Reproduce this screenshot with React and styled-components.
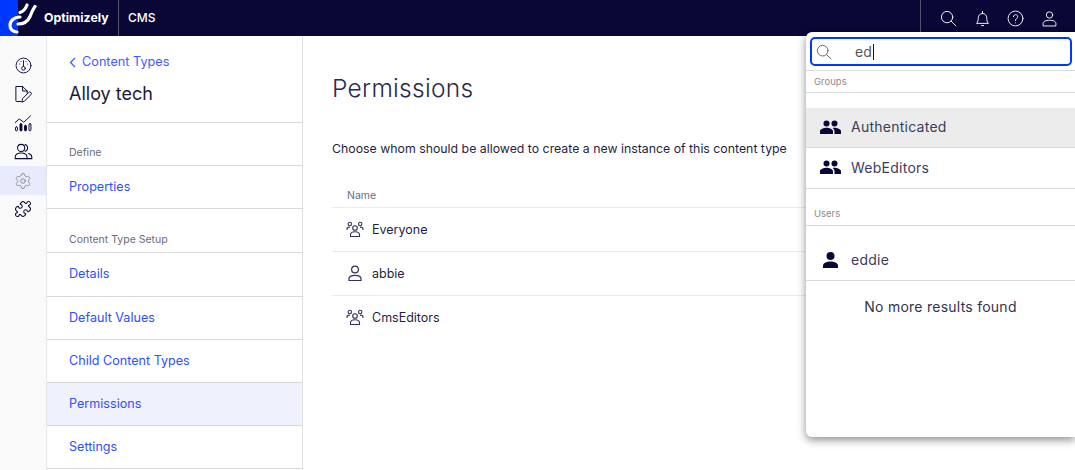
import React from "react";
import styled, { createGlobalStyle } from "styled-components";
import { Settings, Puzzle } from "lucide-react";

const Global = createGlobalStyle`
  html, body { margin: 0; padding: 0; background: #fff; }
  body { font-family: Inter, "Liberation Sans", sans-serif; overflow: hidden; }
  * { box-sizing: border-box; }
`;
const Page = styled.div`position: relative; width: 1075px; height: 470px; overflow: hidden; display: flex; flex-direction: column;`;
const TopBar = styled.header`height: 36px; flex: none; background: #080736; display: flex; align-items: stretch; color: #fff;`;
const LogoBox = styled.div`width: 37px; flex: none; background: linear-gradient(90deg, #0037ff 18px, #080736 18px); svg { display: block; }`;
const Brand = styled.div`width: 82px; font-size: 12.3px; font-weight: 700; line-height: 36px; padding-left: 7px; border-right: 1px solid #55546f;`;
const Product = styled.div`font-size: 12px; font-weight: 500; padding-left: 9px; line-height: 36px;`;
const TopIcons = styled.div`margin-left: auto; width: 155px; border-left: 1px solid #55546f; display: flex; align-items: center; padding-left: 19px; gap: 16.6px;`;
const Body = styled.div`flex: 1; display: flex; min-height: 0;`;
const Rail = styled.nav`width: 47px; flex: none; background: #fafafa; border-right: 1px solid #e6e6e6; padding-top: 15px; display: flex; flex-direction: column; align-items: stretch;`;
const RailItem = styled.div`height: 28.8px; display: flex; align-items: center; justify-content: center; color: ${p => p.$active ? "#8a8aa0" : "#080736"}; background: ${p => p.$active ? "#e8ebfb" : "transparent"};`;
const Side = styled.aside`width: 256px; flex: none; border-right: 1px solid #e0e0e0; display: flex; flex-direction: column;`;
const SideHead = styled.div`height: 87px; padding: 18px 22px 0; border-bottom: 1px solid #d9d9d9; flex: none;`;
const Back = styled.div`display: flex; align-items: center; gap: 6px; color: #3f5cff; font-size: 12.7px; line-height: 16px;`;
const SideTitle = styled.div`margin-top: 12px; font-size: 18px; line-height: 24px; color: #1a1a3c;`;
const SectionLabel = styled.div`height: ${p => p.$h}px; padding: 0 22px 6px; display: flex; align-items: flex-end; font-size: 10.5px; color: #6b6b7d; border-bottom: 1px solid #d9d9d9; flex: none;`;
const SideLink = styled.div`height: ${p => p.$h || 43}px; display: flex; align-items: center; padding: 0 0 2px 22px; font-size: 12.6px; color: ${p => p.$active ? "#3350f0" : "#2f50f5"}; background: ${p => p.$active ? "#eff1fd" : "#fff"}; border-bottom: 1px solid #d9d9d9; flex: none;`;
const Main = styled.main`flex: 1; padding: 36px 29px 0; min-width: 0;`;
const Title = styled.h1`margin: 0; font-weight: 300; font-size: 24.5px; line-height: 32px; color: #2a2a4a; letter-spacing: .3px;`;
const Lead = styled.p`margin: 37px 0 0; font-size: 12.32px; line-height: 16px; color: #1f1f40;`;
const Table = styled.div`margin-top: 23px; width: 560px;`;
const TH = styled.div`height: 28px; display: flex; align-items: flex-end; padding: 0 0 5px 15px; font-size: 10.5px; font-weight: 400; color: #6b7080; border-bottom: 1px solid #ebebeb;`;
const TR = styled.div`height: 44px; display: flex; align-items: center; padding: 0 0 ${p => p.$pb || 0}px 14px; gap: 8px; font-size: 12.5px; color: #1f1f40; border-bottom: 1px solid #ebebeb; &:last-child { border-bottom: 0; }`;
const Drop = styled.section`position: absolute; left: 806px; top: 32px; width: 269px; height: 405px; background: #fff; border-radius: 6px 0 0 6px; box-shadow: 0 3px 9px rgba(0,0,0,.45);`;
const Search = styled.div`margin: 5px 3px 0 4px; height: 29px; border: 2px solid #0037ff; border-radius: 5px; display: flex; align-items: center; padding-left: 4px; color: #555; font-size: 14px;`;
const Typed = styled.span`margin-left: 23px; display: inline-block; border-right: 1px solid #111; line-height: 16px; padding-right: 1px;`;
const Head = styled.div`height: ${p => p.$h}px; padding: 0 0 ${p => p.$pb || 0}px 8px; display: flex; align-items: ${p => p.$align || "center"}; font-size: 9.5px; color: #8b8b8b; border-bottom: 1px solid #d9d9d9; ${p => p.$top ? "border-top: 1px solid #d9d9d9;" : ""}`;
const Spacer = styled.div`height: ${p => p.$h}px;`;
const Row = styled.div`height: ${p => p.$h}px; display: flex; align-items: center; padding: 0 0 2px 14px; gap: 10px; font-size: 14px; letter-spacing: .25px; color: #3c3c5c; background: ${p => p.$active ? "#ececec" : "#fff"}; border-bottom: 1px solid #d9d9d9;`;
const RowIcon = styled.span`width: 21px; display: flex; justify-content: center; color: #080736;`;
const Empty = styled.div`margin-top: 17px; text-align: center; font-size: 14px; font-weight: 400; color: #33334f; letter-spacing: .25px;`;

const S = ({ size = 17, children, w = 1.3 }) => <svg width={size} height={size} viewBox="0 0 24 24" fill="none" stroke="currentColor" strokeWidth={w} strokeLinecap="round" strokeLinejoin="round">{children}</svg>;
const SearchIcon = ({ size = 18 }) => <S size={size}><circle cx="10" cy="10" r="8" /><path d="M16 16l6.5 6.5" /></S>;
const GroupsIcon = () => <svg width="21" height="14" viewBox="0 0 21 14" fill="currentColor"><circle cx="6.5" cy="3.5" r="3" /><circle cx="14.5" cy="3.5" r="3" /><path d="M0 14v-2.5C0 9 4 7.8 6.5 7.8S13 9 13 11.5V14zM14.5 14v-2.5c0-1.500-.7-2.700-1.900-3.600.6-.1 1.300-.1 1.900-.1 2.500 0 6.500 1.200 6.500 3.700V14z" /></svg>;
const PersonIcon = () => <svg width="15" height="16" viewBox="0 0 15 16" fill="currentColor"><circle cx="7.5" cy="4" r="4" /><path d="M0 16v-2.500C0 10.800 4.500 9.500 7.500 9.500s7.500 1.300 7.500 4V16z" /></svg>;
const OutlineGroup = () => <svg width="18" height="17" viewBox="0 0 18 17" fill="none" stroke="#33335a" strokeWidth="1.1"><circle cx="9" cy="7" r="2.3"/><circle cx="3.8" cy="3" r="1.7"/><circle cx="14.2" cy="3" r="1.7"/><path d="M4.500 15.500v-1.700c0-2 2-3 4.500-3s4.500 1 4.500 3v1.700z"/><path d="M1 9V7.800c0-1 1.300-1.700 3-1.700M17 9V7.800c0-1-1.300-1.700-3-1.700"/></svg>;
const OutlinePerson = () => <svg width="18" height="17" viewBox="0 0 18 17" fill="none" stroke="#33335a" strokeWidth="1.2"><circle cx="9" cy="4.500" r="3.400"/><path d="M3 15.500v-1.700c0-2.300 2.600-3.500 6-3.500s6 1.200 6 3.500v1.700z"/></svg>;

const railIcons = [
  <S size={17} key="a"><circle cx="12" cy="12" r="10.500" /><path d="M12 5v8" /><circle cx="12" cy="16" r="2.600" /><path d="M6.500 10h.1M17.500 10h.1M8.500 6.500h.1M15.500 6.500h.1" /></S>,
  <S size={18} key="b"><path d="M9 22H3.500a1 1 0 01-1-1V2h9l6 6v3" /><path d="M11.500 2v6h6" /><path d="M10.500 22.500l1-4.500 8-8a2 2 0 013 3l-8 8z" /></S>,
  <S size={18} key="c"><rect x="2" y="17" width="2.600" height="5.500" rx="1.300" /><rect x="8" y="13" width="2.600" height="9.500" rx="1" fill="currentColor" /><rect x="14" y="15" width="2.600" height="7.500" rx="1.300" fill="currentColor" /><rect x="20" y="13" width="2.600" height="9.500" rx="1.300" /><path d="M1.500 11.500L7 6.500l6 4.500 9-8.500" /></S>,
  <S size={19} key="d"><circle cx="9" cy="7.500" r="4.500" /><path d="M1.500 21v-1.500c0-3.500 3-5.500 7.500-5.500s7.500 2 7.500 5.500V21z" /><path d="M14 3.200a4.500 4.500 0 010 8.600M18.500 14.500c2.500.8 4 2.500 4 4.500v2h-6" /></S>,
  <Settings key="e" size={18} strokeWidth={1.3} />,
  <Puzzle key="f" size={18} strokeWidth={1.4} />,
];

export default function App() {
  return (
    <Page>
      <Global />
      <TopBar>
        <LogoBox>
          <svg width="37" height="36" viewBox="0 0 37 36" fill="none" stroke="#fff" strokeWidth="3.200" strokeLinecap="round">
            <path d="M20 17C14 17 10 21 10 25.500 10 29 13 32 17 32" />
            <path d="M18 24C24 24 28 21 30 16.500 31.500 13 33 9 35 6.500" />
            <path d="M20 12.500C23 11.500 25.500 9 27 5" />
          </svg>
        </LogoBox>
        <Brand>Optimizely</Brand>
        <Product>CMS</Product>
        <TopIcons>
          <SearchIcon size={17} />
          <S size={17}><path d="M4 18.500c1.500-1.500 2-4 2-7.500a6 6 0 0112 0c0 3.500.5 6 2 7.500z" /><path d="M10.500 22h3M12 2v3" /></S>
          <S size={17}><circle cx="12" cy="12" r="10.500" /><path d="M9 9.500a3 3 0 115 2.300c-1.200.9-2 1.500-2 3" /><path d="M12 18h.1" /></S>
          <S size={17}><circle cx="12" cy="7" r="4.500" /><path d="M3 22v-3c0-3 4-4.500 9-4.500s9 1.500 9 4.500v3z" /></S>
        </TopIcons>
      </TopBar>
      <Body>
        <Rail>
          {railIcons.map((icon, i) => <RailItem key={i} $active={i === 4}>{icon}</RailItem>)}
        </Rail>
        <Side>
          <SideHead>
            <Back>
              <svg width="7" height="11" viewBox="0 0 7 11" fill="none" stroke="#3f5cff" strokeWidth="1.300"><path d="M6 1L1.500 5.500 6 10" /></svg>
              Content Types
            </Back>
            <SideTitle>Alloy tech</SideTitle>
          </SideHead>
          <SectionLabel $h={43}>Define</SectionLabel>
          <SideLink>Properties</SideLink>
          <SectionLabel $h={44}>Content Type Setup</SectionLabel>
          <SideLink $h={44}>Details</SideLink>
          <SideLink $h={43}>Default Values</SideLink>
          <SideLink $h={43}>Child Content Types</SideLink>
          <SideLink $active>Permissions</SideLink>
          <SideLink>Settings</SideLink>
        </Side>
        <Main>
          <Title>Permissions</Title>
          <Lead>Choose whom should be allowed to create a new instance of this content type</Lead>
          <Table>
            <TH>Name</TH>
            <TR><OutlineGroup />Everyone</TR>
            <TR><OutlinePerson />abbie</TR>
            <TR $pb={1}><OutlineGroup />CmsEditors</TR>
          </Table>
        </Main>
      </Body>
      <Drop>
        <Search><SearchIcon size={16} /><Typed>ed</Typed></Search>
        <Spacer $h={4} />
        <Head $h={23} $top>Groups</Head>
        <Spacer $h={15} />
        <Row $h={40} $active><RowIcon><GroupsIcon /></RowIcon>Authenticated</Row>
        <Row $h={41}><RowIcon><GroupsIcon /></RowIcon>WebEditors</Row>
        <Head $h={37} $align="flex-end" $pb={6}>Users</Head>
        <Spacer $h={15} />
        <Row $h={40}><RowIcon><PersonIcon /></RowIcon>eddie</Row>
        <Empty>No more results found</Empty>
      </Drop>
    </Page>
  );
}
